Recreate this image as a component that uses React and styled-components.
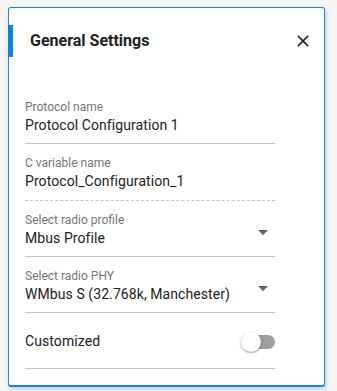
import React from 'react'
import styled, { createGlobalStyle } from 'styled-components'

const GlobalStyle = createGlobalStyle`
  html, body {
    margin: 0;
    padding: 0;
    background: #f5f5f5;
    font-family: Roboto, "Liberation Sans", sans-serif;
  }
`

const Page = styled.div`
  padding: 7px 12px 5px 8px;
`

const Card = styled.div`
  width: 317px;
  box-sizing: border-box;
  background: #fff;
  border: 1px solid #1a84d6;
  border-bottom-width: 2px;
  border-radius: 3px;
  box-shadow: 1px 2px 4px rgba(0, 0, 0, 0.18);
  padding: 17px 0 16px;
`

const Header = styled.div`
  display: flex;
  align-items: center;
  height: 32px;
`

const Accent = styled.div`
  width: 5px;
  align-self: stretch;
  margin-left: -1px;
  background: #0a85d9;
`

const Title = styled.h2`
  flex: 1;
  margin: 0 0 0 17px;
  font-size: 16px;
  font-weight: 700;
  color: #212121;
  line-height: 20px;
`

const CloseButton = styled.button`
  display: flex;
  align-items: center;
  justify-content: center;
  width: 20px;
  height: 20px;
  padding: 0;
  margin-right: 11px;
  border: none;
  background: none;
  color: #212121;
  cursor: pointer;
`

const Fields = styled.div`
  width: 250px;
  margin: 31px 0 0 16px;
`

const Field = styled.div`
  display: flex;
  align-items: center;
  padding: 12px 0 ${({ dashed }) => (dashed ? 9 : 8)}px;
  border-bottom: 1px ${({ dashed }) => (dashed ? 'dashed' : 'solid')} #c2c2c2;
`

const FieldText = styled.div`
  flex: 1;
`

const Label = styled.div`
  font-size: 12px;
  line-height: 14px;
  color: #757575;
`

const Value = styled.div`
  margin-top: 1px;
  font-size: 14px;
  line-height: 20px;
  letter-spacing: 0.08px;
  color: #212121;
`

const ArrowIcon = styled.svg`
  width: 24px;
  height: 24px;
  margin-top: 2px;
  fill: #616161;
`

const SwitchRow = styled.div`
  display: flex;
  align-items: center;
  justify-content: space-between;
  height: 55px;
  border-bottom: 1px solid #c2c2c2;
  font-size: 14px;
  letter-spacing: 0.08px;
  color: #212121;
`

const Switch = styled.div`
  position: relative;
  width: 30px;
  height: 20px;
  display: flex;
  align-items: center;
  margin-top: 2px;
`

const Track = styled.div`
  width: 30px;
  height: 14px;
  margin-left: 4px;
  border-radius: 7px;
  background: ${({ on }) => (on ? '#90caf9' : '#9e9e9e')};
`

const Thumb = styled.div`
  position: absolute;
  left: -4px;
  top: 0;
  width: 20px;
  height: 20px;
  border-radius: 50%;
  background: #fff;
  box-shadow: 0 1px 3px rgba(0, 0, 0, 0.3), 0 1px 1px rgba(0, 0, 0, 0.14);
`

const Arrow = () => (
  <ArrowIcon viewBox="0 0 24 24">
    <path d="M7 10l5 5 5-5z" />
  </ArrowIcon>
)

const fields = [
  { label: 'Protocol name', value: 'Protocol Configuration 1' },
  { label: 'C variable name', value: 'Protocol_Configuration_1', dashed: true },
  { label: 'Select radio profile', value: 'Mbus Profile', select: true },
  { label: 'Select radio PHY', value: 'WMbus S (32.768k, Manchester)', select: true },
]

export default function App() {
  return (
    <Page>
      <GlobalStyle />
      <Card>
        <Header>
          <Accent />
          <Title>General Settings</Title>
          <CloseButton aria-label="Close">
            <svg width="20" height="20" viewBox="0 0 24 24" fill="currentColor">
              <path d="M19 6.41 17.59 5 12 10.59 6.41 5 5 6.41 10.59 12 5 17.59 6.41 19 12 13.41 17.59 19 19 17.59 13.41 12z" />
            </svg>
          </CloseButton>
        </Header>
        <Fields>
          {fields.map(f => (
            <Field key={f.label} dashed={f.dashed}>
              <FieldText>
                <Label>{f.label}</Label>
                <Value>{f.value}</Value>
              </FieldText>
              {f.select && <Arrow />}
            </Field>
          ))}
          <SwitchRow>
            <span>Customized</span>
            <Switch>
              <Track />
              <Thumb />
            </Switch>
          </SwitchRow>
        </Fields>
      </Card>
    </Page>
  )
}
